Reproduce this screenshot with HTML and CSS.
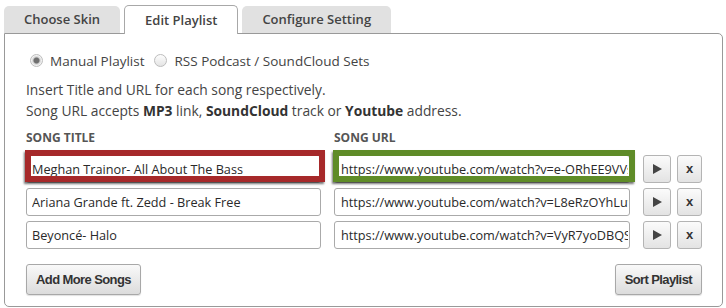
FILE: index.html
```html
<!DOCTYPE html>
<html lang="en">
  <head>
    <meta charset="UTF-8" />
    <title>Edit Playlist</title>
    <link rel="stylesheet" href="styles.css">
  </head>

  <body>
    <!-- Tabs -->
    <div class="tabs">
      <div class="tab">Choose Skin</div>
      <div class="tab active">Edit Playlist</div>
      <div class="tab">Configure Setting</div>
    </div>

    <div class="panel">
      <!-- Playlist source -->
      <div class="source">
        <label class="option">
          <input type="radio" class="radio" name="source" checked />
          Manual Playlist
        </label>
        <label class="option">
          <input type="radio" class="radio" name="source" />
          RSS Podcast / SoundCloud Sets
        </label>
      </div>

      <p class="help">
        Insert Title and URL for each song respectively.<br />
        Song URL accepts <b>MP3</b> link, <b>SoundCloud</b> track or <b>Youtube</b> address.
      </p>

      <div class="song-head">
        <span class="col-title">SONG TITLE</span>
        <span class="col-url">SONG URL</span>
      </div>

      <!-- Songs -->
      <div class="songs">
        <div class="song">
          <span class="field mark mark-red">
            <input type="text" class="text title" value="Meghan Trainor- All About The Bass" />
          </span>
          <span class="field mark mark-green">
            <input type="text" class="text url" value="https://www.youtube.com/watch?v=e-ORhEE9VVs" />
          </span>
          <div class="tools">
            <button class="small play"><svg width="9" height="10" viewBox="0 0 9 10"><path d="M0 0L9 5L0 10Z" /></svg></button>
            <button class="small remove">x</button>
          </div>
        </div>

        <div class="song">
          <span class="field">
            <input type="text" class="text title" value="Ariana Grande ft. Zedd - Break Free" />
          </span>
          <span class="field">
            <input type="text" class="text url" value="https://www.youtube.com/watch?v=L8eRzOYhLuw" />
          </span>
          <div class="tools">
            <button class="small play"><svg width="9" height="10" viewBox="0 0 9 10"><path d="M0 0L9 5L0 10Z" /></svg></button>
            <button class="small remove">x</button>
          </div>
        </div>

        <div class="song">
          <span class="field">
            <input type="text" class="text title" value="Beyoncé- Halo" />
          </span>
          <span class="field">
            <input type="text" class="text url" value="https://www.youtube.com/watch?v=VyR7yoDBQS8" />
          </span>
          <div class="tools">
            <button class="small play"><svg width="9" height="10" viewBox="0 0 9 10"><path d="M0 0L9 5L0 10Z" /></svg></button>
            <button class="small remove">x</button>
          </div>
        </div>
      </div>

      <div class="actions">
        <button class="button">Add More Songs</button>
        <button class="button">Sort Playlist</button>
      </div>
    </div>
  </body>
</html>
```

FILE: styles.css
```css
body {
  margin: 0;
  padding: 5px 3px 0 4px;
  font-family: "Open Sans", Arial, sans-serif;
  font-size: 14px;
  color: #444;
  background: #fff;
}

.tabs {
  display: flex;
  align-items: flex-end;
  gap: 4px;
  height: 28px;
}

.tab {
  height: 27px;
  line-height: 27px;
  padding: 0 20px;
  background: #e1e1e1;
  border-radius: 5px 5px 0 0;
  font-size: 13px;
  font-weight: 600;
  color: #444;
}

.tab.active {
  height: 28px;
  line-height: 28px;
  background: #fff;
  border: 1px solid #a8a8a8;
  border-bottom: none;
  margin-bottom: -1px;
  position: relative;
  z-index: 1;
}

.panel {
  border: 1px solid #999;
  border-radius: 0 5px 5px 5px;
  padding: 16px 20px 11px 21px;
}

.source {
  display: flex;
  align-items: center;
  height: 21px;
  gap: 6px;
  font-size: 13.5px;
}

.option {
  display: flex;
  align-items: center;
}

.radio {
  appearance: none;
  width: 13px;
  height: 13px;
  margin: 0 7px 0 4px;
  border: 1px solid #bdbdbd;
  border-radius: 50%;
  background: linear-gradient(#fdfdfd, #e4e4e4);
}

.radio:checked {
  background: radial-gradient(circle, #6f6f6f 0 2.5px, #cfcfcf 3.5px, #f2f2f2 5px);
}

.help {
  margin: 8px 0 0;
  line-height: 21px;
  font-size: 13.8px;
}

.help b {
  color: #333;
}

.song-head {
  display: flex;
  gap: 13px;
  margin-top: 8px;
  font-size: 12px;
  line-height: 18px;
  font-weight: bold;
  color: #555;
}

.col-title {
  width: 295px;
}

.songs {
  display: flex;
  flex-direction: column;
  gap: 5px;
  margin-top: 8px;
}

.song {
  display: flex;
  align-items: center;
  gap: 13px;
  height: 28px;
}

.field {
  display: block;
  position: relative;
}

.text {
  display: block;
  box-sizing: border-box;
  width: 295px;
  height: 28px;
  margin: 0;
  padding: 0 1px 0 5px;
  border: 1px solid #aaa;
  border-radius: 3px;
  background: #fff;
  font-family: "Open Sans", Arial, sans-serif;
  font-size: 12.7px;
  color: #2a2a2a;
}

.url {
  width: 296px;
  padding-left: 6px;
}

/* annotation frames drawn over the first row */
.mark::after {
  content: "";
  position: absolute;
  border: 6px solid;
  box-shadow: -1px 2px 2px rgba(0, 0, 0, 0.55);
  pointer-events: none;
}

.mark-red::after {
  border-color: #a6292a;
  top: -5px;
  bottom: 1px;
  left: -1px;
  right: -4px;
}

.mark-green::after {
  border-color: #5f8c28;
  top: -5px;
  bottom: 1px;
  left: -1px;
  right: -5px;
}

.tools {
  display: flex;
  gap: 6px;
}

.small {
  display: flex;
  align-items: center;
  justify-content: center;
  width: 28px;
  height: 28px;
  padding: 0;
  border: 1px solid #b4b4b4;
  border-radius: 3px;
  background: linear-gradient(#fbfbfb, #e3e3e3);
  color: #333;
  font-family: "Liberation Sans", Arial, sans-serif;
  font-weight: bold;
  font-size: 13px;
}

.small svg {
  fill: #444;
}

.remove {
  width: 25px;
  padding-bottom: 2px;
}

.actions {
  display: flex;
  justify-content: space-between;
  margin-top: 15px;
}

.button {
  height: 31px;
  padding: 0 9px;
  border: 1px solid #a8a8a8;
  border-radius: 3px;
  background: linear-gradient(#f9f9f9, #dcdcdc);
  box-shadow: 0 1px 1px rgba(0, 0, 0, 0.12);
  color: #333;
  font-family: "Liberation Sans", Arial, sans-serif;
  font-weight: bold;
  font-size: 13px;
  letter-spacing: -0.6px;
}
```
